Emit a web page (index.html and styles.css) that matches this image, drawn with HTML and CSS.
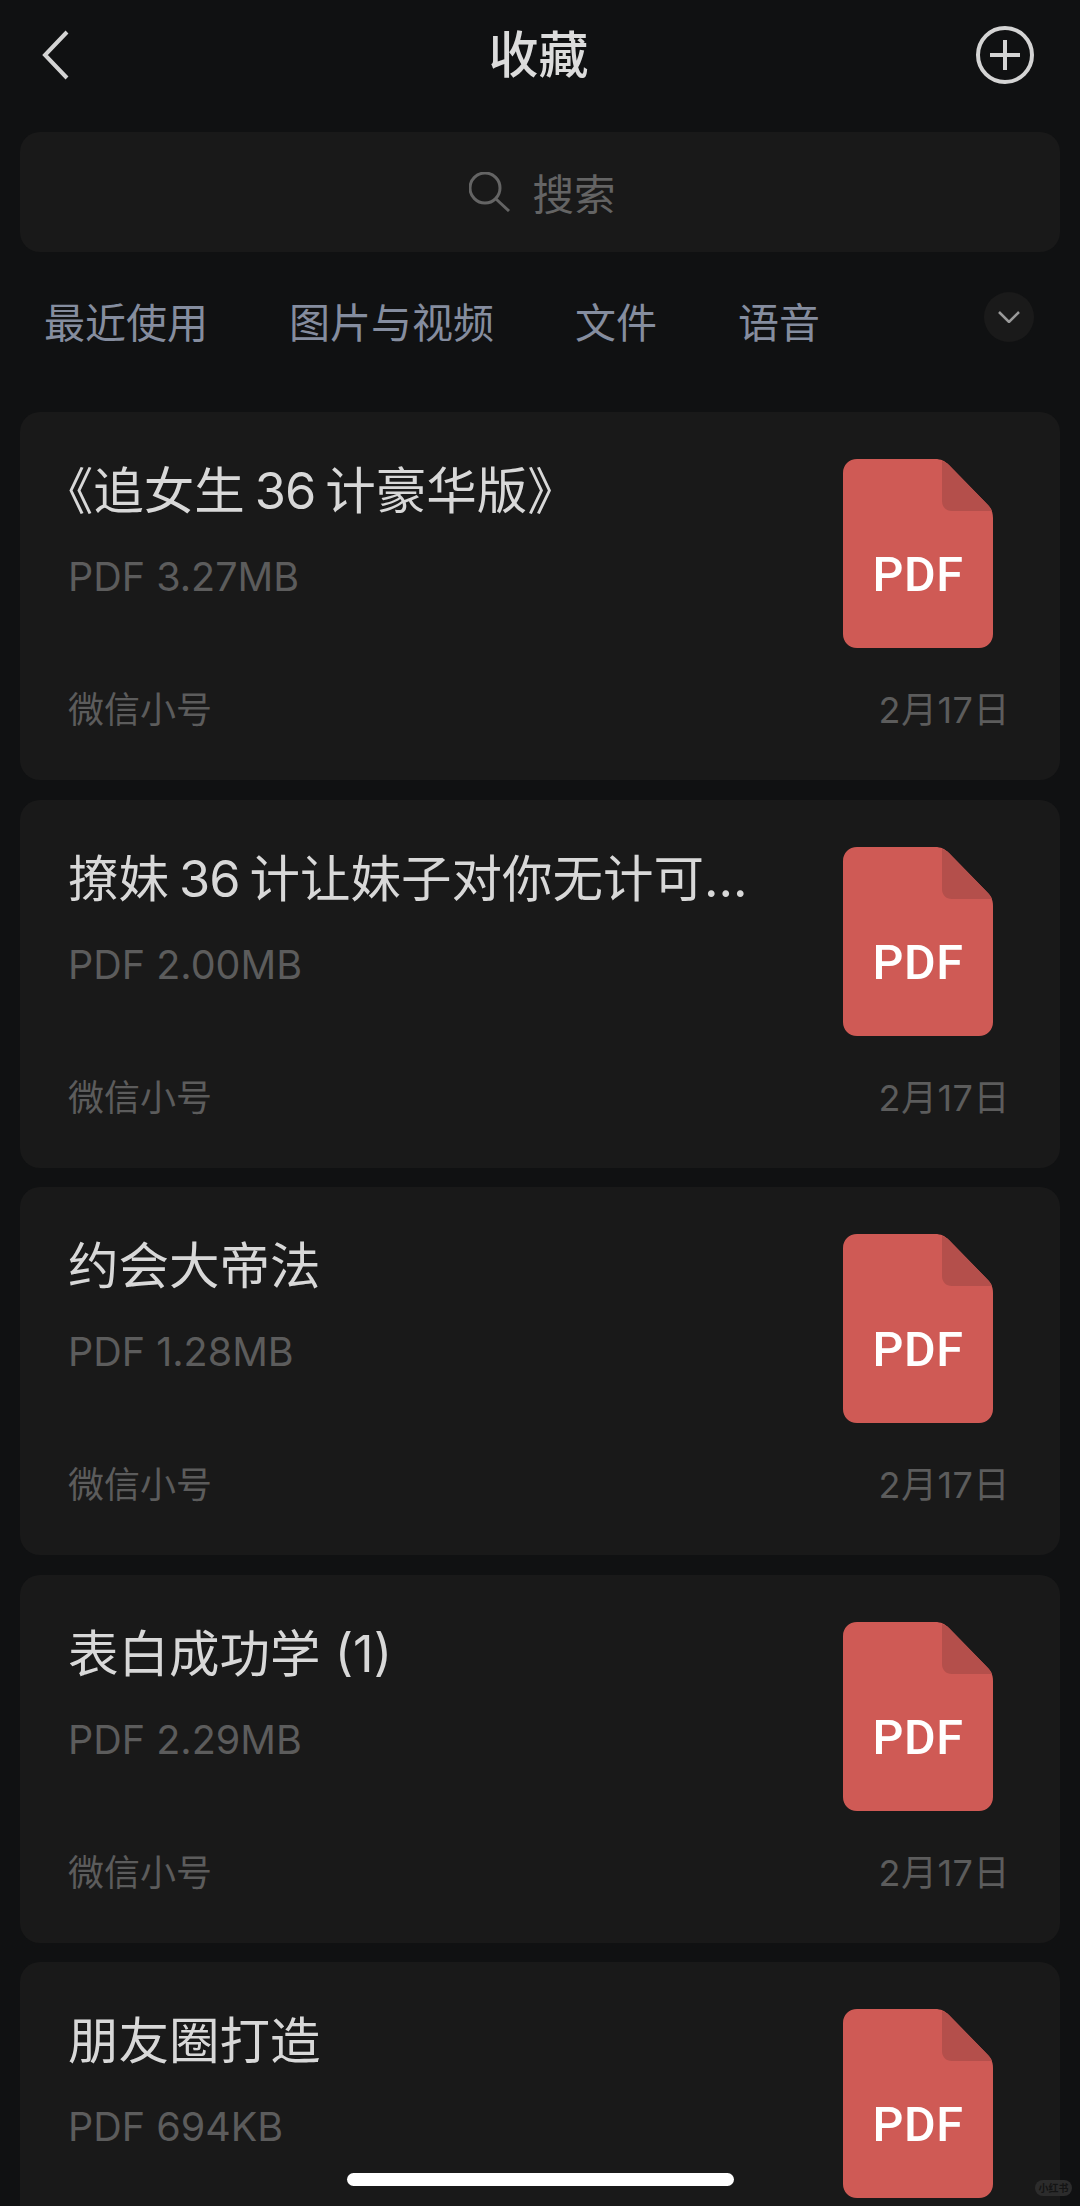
FILE: index.html
```html
<!DOCTYPE html>
<html lang="zh">
  <head>
    <title>收藏</title>
    <meta charset="utf-8">
    <link rel="stylesheet" href="styles.css">
  </head>
  <body>
    <svg class="sprite" width="0" height="0">
      <symbol id="pdf" viewBox="0 0 150 189">
        <path d="M14 0H92c6 0 10 2 14 6l38 39c4 4 6 8 6 14v116c0 8-6 14-14 14H14c-8 0-14-6-14-14V14C0 6 6 0 14 0z" fill="#cf5a55"/>
        <path d="M99 2c3 1 5 2 7 4l38 39c2 2 4 4 5 7H109c-6 0-10-4-10-10z" fill="#b44f4b"/>
      </symbol>
    </svg>

    <!-- (A) TOP BAR -->
    <header class="topbar">
      <svg class="back" viewBox="0 0 28 50"><path d="M25 2 3 25l22 23"/></svg>
      <h1>收藏</h1>
      <svg class="add" viewBox="0 0 60 60"><circle cx="30" cy="30" r="27"/><path d="M30 15v30M15 30h30"/></svg>
    </header>

    <!-- (B) SEARCH -->
    <div class="search">
      <svg viewBox="0 0 42 40"><circle cx="16" cy="16" r="15"/><path d="m27 27 13 12"/></svg>
      <span>搜索</span>
    </div>

    <!-- (C) TABS -->
    <nav class="tabs">
      <a>最近使用</a>
      <a>图片与视频</a>
      <a>文件</a>
      <a>语音</a>
      <button class="more"><svg viewBox="0 0 22 12"><path d="m1 1 10 10L21 1"/></svg></button>
    </nav>

    <!-- (D) FILE LIST -->
    <main class="list">
      <article class="card">
        <div class="info">
          <h2 class="quoted">《追女生<span class="num">36</span>计豪华版》</h2>
          <p class="size">PDF 3.27MB</p>
        </div>
        <div class="file"><svg><use href="#pdf"/></svg><b>PDF</b></div>
        <div class="meta"><span>微信小号</span><span class="date">2月17日</span></div>
      </article>
      <article class="card">
        <div class="info">
          <h2>撩妹<span class="num">36</span>计让妹子对你无计可...</h2>
          <p class="size">PDF 2.00MB</p>
        </div>
        <div class="file"><svg><use href="#pdf"/></svg><b>PDF</b></div>
        <div class="meta"><span>微信小号</span><span class="date">2月17日</span></div>
      </article>
      <article class="card">
        <div class="info">
          <h2>约会大帝法</h2>
          <p class="size">PDF 1.28MB</p>
        </div>
        <div class="file"><svg><use href="#pdf"/></svg><b>PDF</b></div>
        <div class="meta"><span>微信小号</span><span class="date">2月17日</span></div>
      </article>
      <article class="card">
        <div class="info">
          <h2>表白成功学 (1)</h2>
          <p class="size">PDF 2.29MB</p>
        </div>
        <div class="file"><svg><use href="#pdf"/></svg><b>PDF</b></div>
        <div class="meta"><span>微信小号</span><span class="date">2月17日</span></div>
      </article>
      <article class="card">
        <div class="info">
          <h2>朋友圈打造</h2>
          <p class="size">PDF 694KB</p>
        </div>
        <div class="file"><svg><use href="#pdf"/></svg><b>PDF</b></div>
      </article>
    </main>

    <div class="homebar"></div>
    <div class="mark">小红书</div>
  </body>
</html>
```

FILE: styles.css
```css
* {
  font-family: Inter, "Noto Sans CJK SC", sans-serif;
  box-sizing: border-box;
}
html, body {
  margin: 0;
  height: 2206px;
  overflow: hidden;
  background: #101112;
}
.sprite { position: absolute; }

/* (A) TOP BAR */
.topbar {
  display: grid;
  grid-template-columns: 1fr auto 1fr;
  align-items: center;
  height: 132px;
  padding: 0 45px 22px 42px;
}
.topbar h1 {
  margin: 0;
  font-size: 50px;
  font-weight: 500;
  line-height: 60px;
  color: #dcdcdc;
}
.back, .add {
  fill: none;
  stroke: #d4d4d4;
  stroke-width: 4;
}
.back { width: 28px; height: 50px; }
.add { width: 60px; height: 60px; justify-self: end; }

/* (B) SEARCH */
.search {
  display: flex;
  align-items: center;
  justify-content: center;
  gap: 21px;
  height: 120px;
  margin: 0 20px;
  padding-left: 5px;
  border-radius: 20px;
  background: #191919;
  font-size: 41.5px;
  color: #646464;
}
.search svg {
  width: 42px;
  height: 40px;
  fill: none;
  stroke: #646464;
  stroke-width: 3;
}

/* (C) TABS */
.tabs {
  display: flex;
  align-items: center;
  gap: 81px;
  height: 160px;
  padding: 0 46px 24px 44px;
  font-size: 41px;
  color: #858d9f;
}
.more {
  display: flex;
  align-items: center;
  justify-content: center;
  width: 50px;
  height: 50px;
  margin: 0 0 6px auto;
  padding: 0;
  border: 0;
  border-radius: 50%;
  background: #1a1a1a;
}
.more svg {
  width: 22px;
  height: 12px;
  fill: none;
  stroke: #9a9a9a;
  stroke-width: 2.5;
}

/* (D) FILE LIST */
.list {
  display: flex;
  flex-direction: column;
  gap: 19.5px;
  padding: 0 20px;
}
.card {
  display: grid;
  grid-template-columns: 1fr 167px;
  align-content: start;
  flex: none;
  height: 368px;
  padding: 47px 50px 0 48px;
  border-radius: 20px;
  background: #191919;
}
.info { min-width: 0; }
.card h2 {
  margin: 7px 0 0;
  font-size: 50.5px;
  font-weight: 400;
  line-height: 50px;
  white-space: nowrap;
  color: #d8d8d8;
}
.card .quoted { font-feature-settings: "halt"; }
.num {
  margin: 0 10px;
  letter-spacing: -1px;
}
.size {
  margin: 36px 0 0;
  font-size: 39.5px;
  line-height: 50px;
  color: #5c5c5c;
}
.file {
  position: relative;
  width: 150px;
  height: 189px;
}
.file svg {
  display: block;
  width: 150px;
  height: 189px;
}
.file b {
  position: absolute;
  left: 0;
  right: 0;
  top: 88px;
  font-family: Roboto, sans-serif;
  font-size: 48.5px;
  font-weight: 500;
  letter-spacing: 0.5px;
  line-height: 56px;
  text-align: center;
  color: #fff;
}
.meta {
  display: flex;
  grid-column: 1 / -1;
  justify-content: space-between;
  margin-top: 37px;
  font-size: 36px;
  line-height: 50px;
  color: #5c5c5c;
}
.date { letter-spacing: 0.5px; }

/* (E) OVERLAYS */
.homebar {
  position: absolute;
  left: 347px;
  top: 2173px;
  width: 387px;
  height: 13px;
  border-radius: 7px;
  background: #fff;
}
.mark {
  position: absolute;
  left: 1035px;
  top: 2180px;
  width: 37px;
  height: 16px;
  border-radius: 8px;
  background: #2c2c2c;
  font-size: 10px;
  font-weight: 700;
  line-height: 16px;
  text-align: center;
  color: #141414;
}
```
